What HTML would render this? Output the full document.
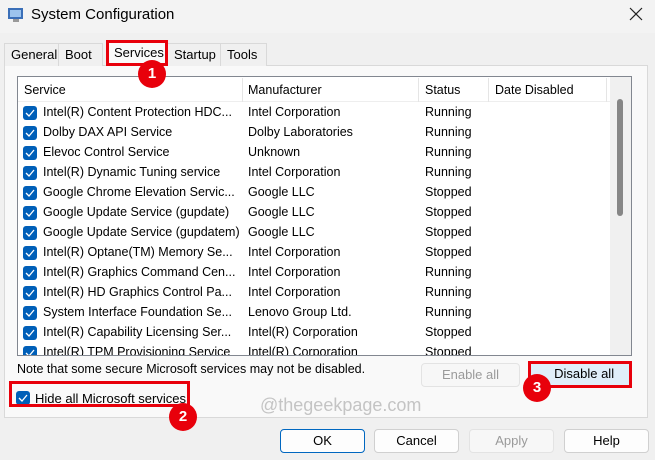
<!DOCTYPE html>
<html><head><style>
*{margin:0;padding:0;box-sizing:border-box}
body{width:655px;height:460px;background:#f0f0f0;font-family:"Liberation Sans",sans-serif;font-size:12.5px;color:#000;position:relative;overflow:hidden}
.a{position:absolute;white-space:nowrap}
.titlebar{left:0;top:0;width:655px;height:33px;background:#f3f3f3}
.tab{position:absolute;top:43px;height:23px;border:1px solid #d9d9d9;border-bottom:none;background:#f0f0f0;padding:3px 0 0 6px;font-size:13px}
.panel{left:4px;top:65px;width:644px;height:353px;background:#f9f9f9;border:1px solid #d9d9d9}
.list{left:17px;top:76px;width:615px;height:280px;background:#fff;border:1px solid #828790;overflow:hidden}
.row{position:absolute;left:0;height:20px;font-size:12.5px}
.cb{position:absolute;width:14px;height:14px;background:#005fb8;border-radius:3px}
.cb svg{position:absolute;left:2px;top:3px}
.btn{position:absolute;height:24px;border:1px solid #d0d0d0;border-radius:4px;background:#fdfdfd;text-align:center;line-height:22px;font-size:13px}
.red{position:absolute;border:3px solid #e8000b}
.badge{position:absolute;width:28px;height:28px;border-radius:50%;background:#e8000b;color:#fff;font-weight:bold;font-size:15px;text-align:center;line-height:28px}
</style></head><body>
<div class="a titlebar"></div>
<svg class="a" style="left:7px;top:6px" width="18" height="18" viewBox="0 0 18 18"><rect x="1" y="2" width="15" height="11" fill="#3a6fb8"/><rect x="3" y="4" width="11" height="7" fill="#9cc4ee"/><rect x="6" y="13" width="6" height="3" fill="#999"/></svg>
<div class="a" style="left:31px;top:6px;font-size:15px">System Configuration</div>
<svg class="a" style="left:629px;top:7px" width="14" height="14"><path d="M1 1L13 13M13 1L1 13" stroke="#222" stroke-width="1.2"/></svg>

<div class="a panel"></div>
<div class="tab" style="left:4px;width:55px">General</div>
<div class="tab" style="left:58px;width:45px">Boot</div>
<div class="tab" style="left:107px;width:61px;top:41px;height:25px;background:#f9f9f9;border-color:#f9f9f9">Services</div>
<div class="tab" style="left:167px;width:54px">Startup</div>
<div class="tab" style="left:220px;width:47px">Tools</div>

<div class="a list">
 <div class="row" style="top:0;width:592px;height:25px;border-bottom:1px solid #eee"></div>
 <div class="a" style="left:224px;top:1px;width:1px;height:24px;background:#e5e5e5"></div>
 <div class="a" style="left:400px;top:1px;width:1px;height:24px;background:#e5e5e5"></div>
 <div class="a" style="left:470px;top:1px;width:1px;height:24px;background:#e5e5e5"></div>
 <div class="a" style="left:588px;top:1px;width:1px;height:24px;background:#e5e5e5"></div>
 <div class="a" style="left:6px;top:6px">Service</div>
 <div class="a" style="left:230px;top:6px">Manufacturer</div>
 <div class="a" style="left:407px;top:6px">Status</div>
 <div class="a" style="left:477px;top:6px">Date Disabled</div>
 <div class="a" style="left:592px;top:0;width:22px;height:280px;background:#f0f0f0"></div>
 <div class="a" style="left:599px;top:22px;width:6px;height:117px;background:#868686;border-radius:3px"></div>
 <div id="rows"></div>
</div>

<div class="a" style="left:17px;top:362px">Note that some secure Microsoft services may not be disabled.</div>
<div class="btn" style="left:421px;top:363px;width:99px;color:#9a9a9a;background:#f7f7f7;border-color:#e3e3e3">Enable all</div>
<div class="btn" style="left:529px;top:362px;width:103px;background:#e0eef9;border-color:#0067c0;border-radius:0">&nbsp;&nbsp;Disable all</div>
<div class="red" style="left:528px;top:361px;width:104px;height:27px"></div>
<div class="badge" style="left:523px;top:374px">3</div>

<div class="cb" style="left:16px;top:391px"><svg width="10" height="8"><path d="M1 4L4 7L9 1" stroke="#fff" stroke-width="1.3" fill="none"/></svg></div>
<div class="a" style="left:35px;top:391px;font-size:13px">Hide all Microsoft services</div>
<div class="red" style="left:9px;top:381px;width:181px;height:26px"></div>
<div class="badge" style="left:169px;top:403px">2</div>
<div class="a" style="left:260px;top:395px;font-size:18px;color:#c4c4c4">@thegeekpage.com</div>

<div class="red" style="left:106px;top:40px;width:62px;height:26px"></div>
<div class="badge" style="left:138px;top:60px">1</div>

<div class="btn" style="left:280px;top:429px;width:85px;border-color:#0067c0">OK</div>
<div class="btn" style="left:374px;top:429px;width:85px">Cancel</div>
<div class="btn" style="left:469px;top:429px;width:85px;color:#9a9a9a;border-color:#e3e3e3;background:#f7f7f7">Apply</div>
<div class="btn" style="left:564px;top:429px;width:85px">Help</div>

<script>
var d=[["Intel(R) Content Protection HDC...","Intel Corporation","Running"],["Dolby DAX API Service","Dolby Laboratories","Running"],["Elevoc Control Service","Unknown","Running"],["Intel(R) Dynamic Tuning service","Intel Corporation","Running"],["Google Chrome Elevation Servic...","Google LLC","Stopped"],["Google Update Service (gupdate)","Google LLC","Stopped"],["Google Update Service (gupdatem)","Google LLC","Stopped"],["Intel(R) Optane(TM) Memory Se...","Intel Corporation","Stopped"],["Intel(R) Graphics Command Cen...","Intel Corporation","Running"],["Intel(R) HD Graphics Control Pa...","Intel Corporation","Running"],["System Interface Foundation Se...","Lenovo Group Ltd.","Running"],["Intel(R) Capability Licensing Ser...","Intel(R) Corporation","Stopped"],["Intel(R) TPM Provisioning Service","Intel(R) Corporation","Stopped"]];
var h="";d.forEach(function(r,i){var t=28+i*20;h+='<div class="cb" style="left:5px;top:'+(t+1)+'px"><svg width="10" height="8"><path d="M1 4L4 7L9 1" stroke="#fff" stroke-width="1.3" fill="none"/></svg></div><div class="a" style="left:25px;top:'+t+'px">'+r[0]+'</div><div class="a" style="left:230px;top:'+t+'px">'+r[1]+'</div><div class="a" style="left:407px;top:'+t+'px">'+r[2]+'</div>';});
document.getElementById("rows").innerHTML=h;
</script>
</body></html>
